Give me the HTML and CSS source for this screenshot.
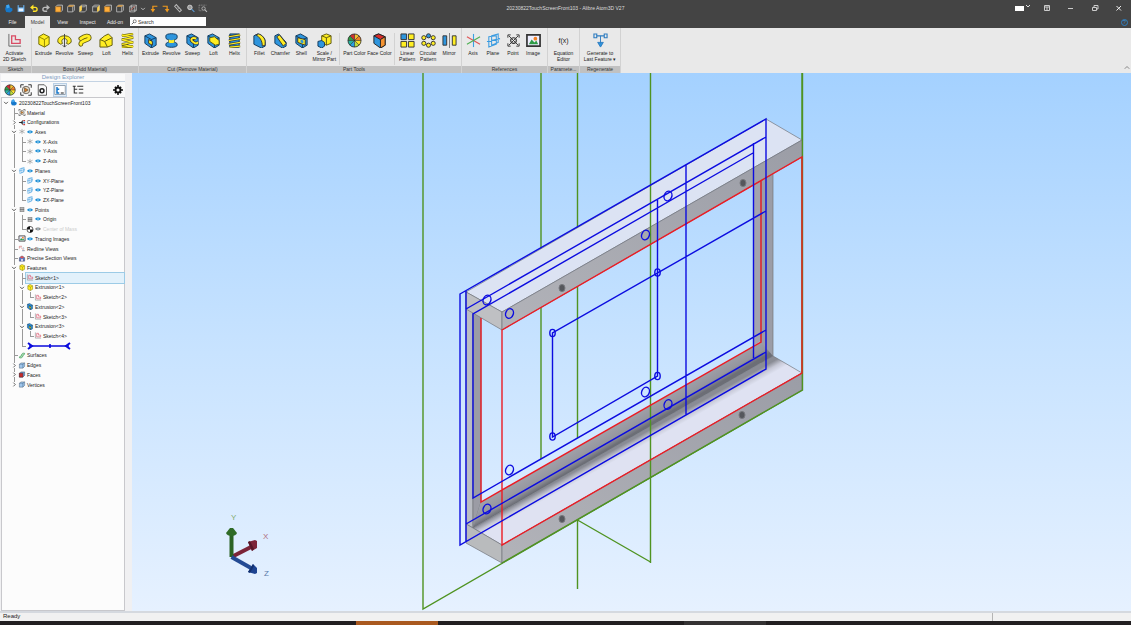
FILE: index.html
```html
<!DOCTYPE html>
<html lang="en">
<head>
<meta charset="utf-8">
<title>20230822TouchScreenFront103 - Alibre Atom3D V27</title>
<link rel="stylesheet" href="styles.css">
</head>
<body>
<svg class="defs" aria-hidden="true">
  <defs>
    <symbol id="logo" viewBox="0 0 16 16"><path d="M3 2l5-1 2 5 4 2v4l-4 3-7-1-2-5z" fill="#1677c9"/><path d="M3 2l5-1 1 5-5 2z" fill="#3fa5ee"/></symbol>
    <symbol id="save" viewBox="0 0 16 16"><path d="M2 2h12v12H2z" fill="#69b1ef"/><path d="M4 2h8v4H4z" fill="#444"/><path d="M4 8h8v5H4z" fill="#e8f3ff"/></symbol>
    <symbol id="undo" viewBox="0 0 16 16"><path d="M4 6h6a3 3 0 0 1 0 7H6" fill="none" stroke="#ffe227" stroke-width="2.5"/><path d="M7 1v10L1 6z" fill="#ffe227"/></symbol>
    <symbol id="redo" viewBox="0 0 16 16"><path d="M12 6H6a3 3 0 0 0 0 7h4" fill="none" stroke="#bbb" stroke-width="2.5"/><path d="M9 1v10l6-5z" fill="#bbb"/></symbol>
    <symbol id="vfront" viewBox="0 0 16 16"><path d="M2 5l3-3h9v9l-3 3" fill="none" stroke="#ccc" stroke-width="1.5"/><path d="M2 5h9v9H2z" fill="#ffae3b" stroke="#d98b22"/></symbol>
    <symbol id="vtop" viewBox="0 0 16 16"><path d="M2 5l3-3h9v9l-3 3H2zM11 5v9M11 5l3-3" fill="none" stroke="#bbb" stroke-width="1.5"/><path d="M2 5l3-3h9l-3 3z" fill="#e2a54b"/></symbol>
    <symbol id="vside" viewBox="0 0 16 16"><path d="M2 5l3-3h9v9l-3 3H2zM2 5h9l3-3" fill="none" stroke="#bbb" stroke-width="1.5"/><path d="M2 5l4-3v9l-4 3z" fill="#ffd34d"/></symbol>
    <symbol id="vright" viewBox="0 0 16 16"><path d="M2 5l3-3h9v9l-3 3H2zM2 5h9" fill="none" stroke="#bbb" stroke-width="1.5"/><path d="M10 6l4-4v9l-4 3z" fill="#ffd34d"/></symbol>
    <symbol id="viso" viewBox="0 0 16 16"><path d="M2 5l3-3h9v9l-3 3H2zM2 5h9v9M11 5l3-3M5 2v9h9M5 11l-3 3" fill="none" stroke="#ccc" stroke-width="1.2"/><path d="M4 11l7-7" stroke="#d06a5e" stroke-width="1.5"/></symbol>
    <symbol id="arrL" viewBox="0 0 16 16"><path d="M14 4H6v7" fill="none" stroke="#f09a1e" stroke-width="2.2"/><path d="M2 9h8l-4 6z" fill="#f09a1e"/></symbol>
    <symbol id="arrR" viewBox="0 0 16 16"><path d="M2 4h8v7" fill="none" stroke="#f09a1e" stroke-width="2.2"/><path d="M6 9h8l-4 6z" fill="#f09a1e"/></symbol>
    <symbol id="ruler" viewBox="0 0 16 16"><path d="M2 4l3-3 9 10-3 3z" fill="none" stroke="#bbb" stroke-width="1.8"/><path d="M6 6l2-1M8 9l2-2" stroke="#bbb"/></symbol>
    <symbol id="lens" viewBox="0 0 16 16"><circle cx="6" cy="6" r="4" fill="#999" stroke="#ddd" stroke-width="1.5"/><path d="M9 9l5 5" stroke="#5b9bd5" stroke-width="2"/></symbol>
    <symbol id="lensbox" viewBox="0 0 16 16"><path d="M1 2h13M1 2v10h6" fill="none" stroke="#999" stroke-width="1.3" stroke-dasharray="2 1"/><circle cx="9" cy="8" r="3" fill="none" stroke="#bbb" stroke-width="1.5"/><path d="M11 10l4 4" stroke="#bbb" stroke-width="1.8"/></symbol>
    <symbol id="chev" viewBox="0 0 8 8"><path d="M1 3l3 3 3-3" fill="none" stroke="currentColor" stroke-width="1.2"/></symbol>
    <symbol id="chevR" viewBox="0 0 8 8"><path d="M3 1l3 3-3 3" fill="none" stroke="currentColor" stroke-width="1.1"/></symbol>

    <symbol id="sketch" viewBox="0 0 16 16"><path d="M2 1v13h13" fill="none" stroke="#666"/><path d="M5 11V3h4v4h5v4z" fill="none" stroke="#d94c64" stroke-width="1.4"/></symbol>
    <symbol id="extrude" viewBox="0 0 16 16"><path d="M3 4l5-3 6 3v8l-5 3-6-3z" fill="#ffee22" stroke="#6c6600"/><path d="M3 4l6 3v8M9 7l5-3" fill="none" stroke="#8c8300"/></symbol>
    <symbol id="revolve" viewBox="0 0 16 16"><path d="M1 10C0 5 4 3 8 3s8 2 7 7l-3 2-2-1c2-3 0-5-2-5S4 8 6 11l-2 1z" fill="#ffee22" stroke="#5c5610"/><path d="M8 1v14M6 13l2 2 2-2" stroke="#444" fill="none"/></symbol>
    <symbol id="sweep" viewBox="0 0 16 16"><path d="M3 12C2 8 12 8 12 5S7 3 3 6" fill="none" stroke="#5c5610" stroke-width="5" stroke-linecap="round"/><path d="M3 12C2 8 12 8 12 5S7 3 3 6" fill="none" stroke="#ffee22" stroke-width="3.2" stroke-linecap="round"/></symbol>
    <symbol id="loft" viewBox="0 0 16 16"><path d="M1 7l5-4 4-2 4 4v8l-5 2H1z" fill="#ffee22" stroke="#5c5610"/><path d="M1 7l5 2 8-4M6 9l3 6" fill="none" stroke="#5c5610"/></symbol>
    <symbol id="helix" viewBox="0 0 16 16"><path d="M2 2l12 3L2 7l12 3-12 2 12 3M14 1L2 3M14 14L2 15" fill="none" stroke="#5c5610" stroke-width="2.6"/><path d="M2 2l12 3L2 7l12 3-12 2 12 3M14 1L2 3M14 14L2 15" fill="none" stroke="#ffee22" stroke-width="1.3"/></symbol>
    <symbol id="cutbox" viewBox="0 0 16 16"><path d="M2 3l5-2 7 4v8l-5 3-7-5z" fill="#2e95dd" stroke="#123a5c"/><path d="M2 3l7 4v9M9 7l5-2" fill="none" stroke="#123a5c"/></symbol>
    <symbol id="cextrude" viewBox="0 0 16 16"><use href="#cutbox"/><path d="M6 7l4 2v4l-4-2z" fill="#ffee22" stroke="#333"/></symbol>
    <symbol id="crevolve" viewBox="0 0 16 16"><path d="M2 3c0-3 12-3 12 0v2c0 2-3 2-3 2v3s3 0 3 2v1c0 3-12 3-12 0v-1c0-2 3-2 3-2V7S2 7 2 5z" fill="#2e95dd" stroke="#123a5c"/><path d="M5 7c2 1 4 1 6 0v3c-2 1-4 1-6 0z" fill="#ffee22"/></symbol>
    <symbol id="csweep" viewBox="0 0 16 16"><use href="#cutbox"/><path d="M12 6c-4-2-7 1-4 3s3 3 6 1" fill="none" stroke="#333" stroke-width="3.6"/><path d="M12 6c-4-2-7 1-4 3s3 3 6 1" fill="none" stroke="#ffee22" stroke-width="2"/></symbol>
    <symbol id="cloft" viewBox="0 0 16 16"><use href="#cutbox"/><path d="M4 5l5-1 5 4v4l-4 1-6-4z" fill="#ffee22" stroke="#5c5610"/></symbol>
    <symbol id="chelix" viewBox="0 0 16 16"><path d="M3 1h10v14H3z" fill="#2e95dd" stroke="#123a5c"/><path d="M2 4l12-2M2 8l12-2M2 12l12-2M3 15l11-1" stroke="#333" stroke-width="2.6"/><path d="M2 4l12-2M2 8l12-2M2 12l12-2M3 15l11-1" stroke="#ffee22" stroke-width="1.3"/></symbol>
    <symbol id="fillet" viewBox="0 0 16 16"><path d="M2 3l4-2c5 1 8 5 8 8v5l-4 2-8-4z" fill="#2e95dd" stroke="#123a5c"/><path d="M4 2l3-1c4 1 7 5 7 8v4l-3 1c0-6-3-10-7-12z" fill="#ffee22" stroke="#333"/></symbol>
    <symbol id="chamfer" viewBox="0 0 16 16"><path d="M2 3l4-2 8 9v4l-4 2-8-5z" fill="#2e95dd" stroke="#123a5c"/><path d="M4 4l3-2 7 9-3 3z" fill="#ffee22" stroke="#333"/></symbol>
    <symbol id="shell" viewBox="0 0 16 16"><use href="#cutbox"/><path d="M4 5l8 2v6l-8-3z" fill="#ffee22" stroke="#333"/><path d="M7 7l3 1v3L7 10z" fill="#2e95dd"/></symbol>
    <symbol id="scale" viewBox="0 0 16 16"><path d="M5 3l5-2 5 2v8l-5 2-5-3z" fill="#ffee22" stroke="#5c5610"/><path d="M10 5v8M5 3l5 2 5-2" fill="none" stroke="#5c5610"/><path d="M1 9l4-1 3 2v4l-3 2-4-2z" fill="#2e95dd" stroke="#123a5c"/></symbol>
    <symbol id="wheel" viewBox="0 0 16 16"><path d="M8 8V1a7 7 0 0 1 5 2z" fill="#f4c12e"/><path d="M8 8l5-5a7 7 0 0 1 2 5z" fill="#f08226"/><path d="M8 8h7a7 7 0 0 1-2 5z" fill="#ffe227"/><path d="M8 8l5 5a7 7 0 0 1-5 2z" fill="#b8dc3f"/><path d="M8 8v7a7 7 0 0 1-5-2z" fill="#2b9fe2"/><path d="M8 8l-5 5a7 7 0 0 1-2-5z" fill="#27b5a0"/><path d="M8 8H1a7 7 0 0 1 2-5z" fill="#2f9c47"/><path d="M8 8L3 3a7 7 0 0 1 5-2z" fill="#cf3030"/><path d="M8 1v14M1 8h14M3 3l10 10M13 3L3 13" stroke="#222" stroke-width=".6"/><circle cx="8" cy="8" r="7" fill="none" stroke="#222" stroke-width=".8"/></symbol>
    <symbol id="facecolor" viewBox="0 0 16 16"><path d="M2 3l5-2 7 3v9l-5 3-7-5z" fill="#2e95dd" stroke="#222"/><path d="M2 3l5-2 7 3-5 3z" fill="#d92d2d" stroke="#222"/><path d="M9 7l5-3v9l-5 3z" fill="#f59331" stroke="#222"/></symbol>
    <symbol id="linear" viewBox="0 0 16 16"><path d="M1 1h6v6H1z" fill="#2e95dd" stroke="#333"/><path d="M9 1h6v6H9zM1 9h6v6H1zM9 9h6v6H9z" fill="#ffee22" stroke="#333"/></symbol>
    <symbol id="circular" viewBox="0 0 16 16"><g fill="#ffee22" stroke="#333"><circle cx="13" cy="5" r="2.2"/><circle cx="13" cy="11" r="2.2"/><circle cx="8" cy="13" r="2.2"/><circle cx="3" cy="11" r="2.2"/><circle cx="3" cy="5" r="2.2"/><circle cx="8" cy="3" r="2.2" fill="#2e95dd"/></g></symbol>
    <symbol id="mirror" viewBox="0 0 16 16"><path d="M1 3h4v10H1z" fill="#2e95dd" stroke="#333"/><path d="M11 3h4v10h-4z" fill="#ffee22" stroke="#333"/><path d="M8 0v16" stroke="#777"/></symbol>
    <symbol id="axis" viewBox="0 0 16 16"><path d="M8 1v14" stroke="#3aa0e0" stroke-width="1.2"/><path d="M1 4l14 8" stroke="#e05555" stroke-width="1.2"/><path d="M1 12l14-8" stroke="#4caf50" stroke-width="1.2"/></symbol>
    <symbol id="plane" viewBox="0 0 16 16"><path d="M3 4l8-1v9l-8 3zM6 3l7-2v9l-7 3zM1 9l14-3" fill="none" stroke="#3a9be0" stroke-width="1.1"/></symbol>
    <symbol id="point" viewBox="0 0 16 16"><circle cx="8" cy="8" r="3" fill="none" stroke="#333" stroke-width="1.2"/><path d="M3 3l10 10M13 3L3 13M2 5V2h3M11 2h3v3M14 11v3h-3M5 14H2v-3" fill="none" stroke="#333"/></symbol>
    <symbol id="image" viewBox="0 0 16 16"><path d="M1 2h14v12H1z" fill="#eef" stroke="#333" stroke-width="1.8"/><path d="M3 12l3-5 3 3 2-2 2 4z" fill="#2f9c47"/><circle cx="10" cy="6" r="2" fill="#f08226"/></symbol>
    <symbol id="regen" viewBox="0 0 16 16"><path d="M1 1h3v4H1zM12 1h3v4h-3zM4 3h8" fill="none" stroke="#2e7cc0" stroke-width="1.2"/><path d="M8 3v8M5 10l3 5 3-5z" fill="#2e95dd" stroke="#2e7cc0"/></symbol>
    <symbol id="material" viewBox="0 0 16 16"><path d="M1 5V1h4M11 1h4v4M15 11v4h-4M5 15H1v-4" fill="none" stroke="#333" stroke-width="1.3"/><circle cx="8" cy="8" r="5" fill="#e8dcc6" stroke="#444"/><path d="M6 5l5 3-5 3z" fill="#d9791e" stroke="#444" stroke-width=".7"/></symbol>
    <symbol id="docgear" viewBox="0 0 16 16"><path d="M3 1h8l3 3v11H3z" fill="none" stroke="#333"/><circle cx="8" cy="9" r="2.6" fill="none" stroke="#222" stroke-width="2"/></symbol>
    <symbol id="explorer" viewBox="0 0 16 16"><path d="M1 2h14v12H1z" fill="#fff" stroke="#789"/><path d="M4 4v8h3M4 7h3" stroke="#1677c9" fill="none" stroke-width="2"/><path d="M9 12h4" stroke="#333" stroke-width="1.5"/></symbol>
    <symbol id="branch" viewBox="0 0 16 16"><path d="M1 3h4M3 3v9h4M3 7h4M7 3h8M9 7h6M9 12h6" fill="none" stroke="#333" stroke-width="1.4"/></symbol>
    <symbol id="gear" viewBox="0 0 16 16"><circle cx="8" cy="8" r="4" fill="none" stroke="#111" stroke-width="3"/><path d="M8 0v4M8 12v4M0 8h4M12 8h4M3 3l2 2M11 11l2 2M13 3l-2 2M5 11l-2 2" stroke="#111" stroke-width="2.5"/></symbol>
    <symbol id="config" viewBox="0 0 16 16"><path d="M1 8h8M9 3v10" stroke="#333" stroke-width="2"/><path d="M8 5v6L3 8z" fill="#222"/><path d="M11 2h4v3h-4zM11 11h4v3h-4z" fill="#c33"/><path d="M11 6h4v4h-4z" fill="#38c"/></symbol>
    <symbol id="taxis" viewBox="0 0 16 16"><path d="M8 2v12M2 5l12 6M2 11l12-6" stroke="#888" stroke-width="1.3"/></symbol>
    <symbol id="eye" viewBox="0 0 16 16"><path d="M0 8c4-5 12-5 16 0-4 5-12 5-16 0z" fill="currentColor"/><circle cx="8" cy="8" r="2" fill="#bde3fa"/></symbol>
    <symbol id="tpoint" viewBox="0 0 16 16"><path d="M4 3v10M12 3v10M8 3v10M3 4h10M3 12h10M3 8h10" stroke="#555" stroke-width="1.4"/></symbol>
    <symbol id="mass" viewBox="0 0 16 16"><circle cx="8" cy="8" r="7" fill="#fff" stroke="#111" stroke-width="1.5"/><path d="M8 8V1a7 7 0 0 0-7 7zM8 8v7a7 7 0 0 0 7-7z" fill="#111"/></symbol>
    <symbol id="redline" viewBox="0 0 16 16"><path d="M2 3h6M2 3v5M5 5l8 8" fill="none" stroke="#c66" stroke-width="1.4"/><path d="M8 13h6M10 6l3 2" stroke="#579" stroke-width="1.4"/></symbol>
    <symbol id="section" viewBox="0 0 16 16"><path d="M2 6l6-4 6 4v8H2z" fill="#5577c8" stroke="#334"/><path d="M3 5l5-3 5 3-5 3z" fill="#d55"/><path d="M6 9h4v5H6z" fill="#dde"/></symbol>
    <symbol id="surface" viewBox="0 0 16 16"><path d="M2 13c0-5 5-2 5-6s4-5 7-4c0 5-4 3-4 6s-4 6-8 4z" fill="#a9dfb5" stroke="#2f8f47" stroke-width="1.4"/></symbol>
    <symbol id="edgebox" viewBox="0 0 16 16"><path d="M2 5l4-3h8v8l-4 4H2z" fill="#9fc6ec" stroke="#456"/><path d="M2 5h8v9M10 5l4-3" fill="none" stroke="#357"/></symbol>
    <symbol id="facebox" viewBox="0 0 16 16"><path d="M2 5l4-3h8v8l-4 4H2z" fill="#6a9ad0" stroke="#345"/><path d="M2 5h8v9H2z" fill="#c62a2a" stroke="#522"/></symbol>
  </defs>
</svg>

<header class="titlebar">
  <div class="quick">
    <svg><use href="#logo"/></svg><svg><use href="#save"/></svg><svg><use href="#undo"/></svg><svg><use href="#redo"/></svg><svg><use href="#vfront"/></svg><svg><use href="#vtop"/></svg><svg><use href="#vside"/></svg><svg><use href="#vright"/></svg><svg><use href="#vfront"/></svg><svg><use href="#vtop"/></svg><svg><use href="#viso"/></svg><svg class="narrow"><use href="#chev"/></svg><svg><use href="#arrL"/></svg><svg><use href="#arrR"/></svg><svg><use href="#ruler"/></svg><svg><use href="#lens"/></svg><svg><use href="#lensbox"/></svg>
  </div>
  <h1 class="title">20230822TouchScreenFront103 - Alibre Atom3D V27</h1>
  <div class="controls">
    <button class="win" aria-label="Theme"><svg viewBox="0 0 16 8"><path d="M0 2h9v5H0z" fill="#fff"/><path d="M11 1l2 2 2-2" fill="none" stroke="#ddd"/></svg></button>
    <button class="win" aria-label="Ribbon options"><svg viewBox="0 0 16 8"><path d="M5.5 1.5h5v5h-5zM5.5 3h5M8 3v3" fill="none" stroke="#ccc"/></svg></button>
    <button class="win" aria-label="Minimize"><svg viewBox="0 0 16 8"><path d="M5 4.500h5" stroke="#ccc"/></svg></button>
    <button class="win" aria-label="Restore"><svg viewBox="0 0 16 8"><path d="M5.5 3.500h4v3h-4zM7 3V1.500h4V5H10" fill="none" stroke="#ccc"/></svg></button>
    <button class="win" aria-label="Close"><svg viewBox="0 0 16 8"><path d="M5.500 2l4.500 4.500M10 2L5.500 6.500" stroke="#eee"/></svg></button>
  </div>
</header>

<nav class="tabs">
  <button class="tab">File</button><button class="tab active">Model</button><button class="tab">View</button><button class="tab">Inspect</button><button class="tab wide">Add-on</button>
  <label class="search"><svg viewBox="0 0 8 8"><circle cx="5" cy="3" r="2" fill="none" stroke="#444" stroke-width=".8"/><path d="M4 4L1 7" stroke="#444"/></svg><input type="text" placeholder="Search" aria-label="Search"></label>
  <button class="help" aria-label="Help">?</button>
</nav>

<section class="ribbon">
  <div class="group sk"><div class="tools"><button class="tool w29"><svg><use href="#sketch"/></svg>Activate<br>2D Sketch</button></div><div class="caption">Sketch</div></div>
  <div class="group boss"><div class="tools">
    <button class="tool"><svg><use href="#extrude"/></svg>Extrude</button><button class="tool"><svg><use href="#revolve"/></svg>Revolve</button><button class="tool"><svg><use href="#sweep"/></svg>Sweep</button><button class="tool"><svg><use href="#loft"/></svg>Loft</button><button class="tool"><svg><use href="#helix"/></svg>Helix</button></div><div class="caption">Boss (Add Material)</div></div>
  <div class="group cut"><div class="tools">
    <button class="tool"><svg><use href="#cextrude"/></svg>Extrude</button><button class="tool"><svg><use href="#crevolve"/></svg>Revolve</button><button class="tool"><svg><use href="#csweep"/></svg>Sweep</button><button class="tool"><svg><use href="#cloft"/></svg>Loft</button><button class="tool"><svg><use href="#chelix"/></svg>Helix</button></div><div class="caption">Cut (Remove Material)</div></div>
  <div class="group part"><div class="tools">
    <div class="sub s93"><button class="tool"><svg><use href="#fillet"/></svg>Fillet</button><button class="tool"><svg><use href="#chamfer"/></svg>Chamfer</button><button class="tool"><svg><use href="#shell"/></svg>Shell</button><button class="tool w25"><svg><use href="#scale"/></svg>Scale /<br>Mirror Part</button></div>
    <div class="sub s56"><button class="tool w25"><svg><use href="#wheel"/></svg>Part Color</button><button class="tool w25"><svg><use href="#facecolor"/></svg>Face Color</button></div>
    <div class="sub s66"><button class="tool"><svg><use href="#linear"/></svg>Linear<br>Pattern</button><button class="tool"><svg><use href="#circular"/></svg>Circular<br>Pattern</button><button class="tool"><svg><use href="#mirror"/></svg>Mirror</button></div>
  </div><div class="caption">Part Tools</div></div>
  <div class="group refs"><div class="tools">
    <button class="tool w20"><svg><use href="#axis"/></svg>Axis</button><button class="tool w20"><svg><use href="#plane"/></svg>Plane</button><button class="tool w20"><svg><use href="#point"/></svg>Point</button><button class="tool w20"><svg><use href="#image"/></svg>Image</button></div><div class="caption">References</div></div>
  <div class="group param"><div class="tools"><button class="tool w29"><span class="fx">f(x)</span>Equation<br>Editor</button></div><div class="caption">Paramete...</div></div>
  <div class="group gen"><div class="tools"><button class="tool w38"><svg><use href="#regen"/></svg>Generate to<br>Last Feature ▾</button></div><div class="caption">Regenerate</div></div>
  <button class="collapse" aria-label="Collapse ribbon"><svg viewBox="0 0 8 8"><path d="M1 5l3-3 3 3" fill="none" stroke="#666"/></svg></button>
</section>

<main class="work">
  <aside class="explorer">
    <h2 class="heading">Design Explorer</h2>
    <div class="bar">
      <button class="ico" aria-label="Colors"><svg><use href="#wheel"/></svg></button><button class="ico" aria-label="Material"><svg><use href="#material"/></svg></button><button class="ico" aria-label="Properties"><svg><use href="#docgear"/></svg></button><button class="ico on" aria-label="Explorer"><svg><use href="#explorer"/></svg></button><button class="ico" aria-label="Hierarchy"><svg><use href="#branch"/></svg></button><button class="ico last" aria-label="Options"><svg><use href="#gear"/></svg></button>
    </div>
    <div class="tree">
      <div class="row"><i class="x"><svg><use href="#chev"/></svg></i><svg><use href="#logo"/></svg><span>20230822TouchScreenFront103</span></div>
      <div class="row"><i></i><i class="v t"></i><svg><use href="#material"/></svg><span>Material</span></div>
      <div class="row"><i></i><i class="v x"><svg><use href="#chevR"/></svg></i><svg><use href="#config"/></svg><span>Configurations</span></div>
      <div class="row"><i></i><i class="v x"><svg><use href="#chev"/></svg></i><svg><use href="#taxis"/></svg><svg class="eye"><use href="#eye"/></svg><span>Axes</span></div>
      <div class="row"><i></i><i class="v"></i><i class="v t"></i><svg><use href="#taxis"/></svg><svg class="eye"><use href="#eye"/></svg><span>X-Axis</span></div>
      <div class="row"><i></i><i class="v"></i><i class="v t"></i><svg><use href="#taxis"/></svg><svg class="eye"><use href="#eye"/></svg><span>Y-Axis</span></div>
      <div class="row"><i></i><i class="v"></i><i class="e t"></i><svg><use href="#taxis"/></svg><svg class="eye"><use href="#eye"/></svg><span>Z-Axis</span></div>
      <div class="row"><i></i><i class="v x"><svg><use href="#chev"/></svg></i><svg><use href="#plane"/></svg><svg class="eye"><use href="#eye"/></svg><span>Planes</span></div>
      <div class="row"><i></i><i class="v"></i><i class="v t"></i><svg><use href="#plane"/></svg><svg class="eye"><use href="#eye"/></svg><span>XY-Plane</span></div>
      <div class="row"><i></i><i class="v"></i><i class="v t"></i><svg><use href="#plane"/></svg><svg class="eye"><use href="#eye"/></svg><span>YZ-Plane</span></div>
      <div class="row"><i></i><i class="v"></i><i class="e t"></i><svg><use href="#plane"/></svg><svg class="eye"><use href="#eye"/></svg><span>ZX-Plane</span></div>
      <div class="row"><i></i><i class="v x"><svg><use href="#chev"/></svg></i><svg><use href="#tpoint"/></svg><svg class="eye"><use href="#eye"/></svg><span>Points</span></div>
      <div class="row"><i></i><i class="v"></i><i class="v t"></i><svg><use href="#tpoint"/></svg><svg class="eye"><use href="#eye"/></svg><span>Origin</span></div>
      <div class="row"><i></i><i class="v"></i><i class="e t"></i><svg><use href="#mass"/></svg><svg class="eye off"><use href="#eye"/></svg><span class="dim">Center of Mass</span></div>
      <div class="row"><i></i><i class="v t"></i><svg><use href="#image"/></svg><svg class="eye"><use href="#eye"/></svg><span>Tracing Images</span></div>
      <div class="row"><i></i><i class="v t"></i><svg><use href="#redline"/></svg><span>Redline Views</span></div>
      <div class="row"><i></i><i class="v t"></i><svg><use href="#section"/></svg><span>Precise Section Views</span></div>
      <div class="row"><i></i><i class="v x"><svg><use href="#chev"/></svg></i><svg><use href="#extrude"/></svg><span>Features</span></div>
      <div class="row"><i></i><i class="v"></i><i class="v t"></i><div class="picked"><svg><use href="#sketch"/></svg><span>Sketch&lt;1&gt;</span></div></div>
      <div class="row"><i></i><i class="v"></i><i class="v x"><svg><use href="#chev"/></svg></i><svg><use href="#extrude"/></svg><span>Extrusion&lt;1&gt;</span></div>
      <div class="row"><i></i><i class="v"></i><i class="v"></i><i class="e t"></i><svg><use href="#sketch"/></svg><span>Sketch&lt;2&gt;</span></div>
      <div class="row"><i></i><i class="v"></i><i class="v x"><svg><use href="#chev"/></svg></i><svg><use href="#cextrude"/></svg><span>Extrusion&lt;2&gt;</span></div>
      <div class="row"><i></i><i class="v"></i><i class="v"></i><i class="e t"></i><svg><use href="#sketch"/></svg><span>Sketch&lt;3&gt;</span></div>
      <div class="row"><i></i><i class="v"></i><i class="v x"><svg><use href="#chev"/></svg></i><svg><use href="#cextrude"/></svg><span>Extrusion&lt;3&gt;</span></div>
      <div class="row"><i></i><i class="v"></i><i class="v"></i><i class="e t"></i><svg><use href="#sketch"/></svg><span>Sketch&lt;4&gt;</span></div>
      <div class="row"><i></i><i class="v"></i><i class="e t"></i><svg class="dog" viewBox="0 0 46 8"><path d="M3 4h40M24 2v4" stroke="#0a0adc" stroke-width="1.6"/><path d="M2 1l4 3-4 3M44 1l-4 3 4 3" fill="none" stroke="#0a0adc" stroke-width="2"/></svg></div>
      <div class="row"><i></i><i class="v t"></i><svg><use href="#surface"/></svg><span>Surfaces</span></div>
      <div class="row"><i></i><i class="v x"><svg><use href="#chevR"/></svg></i><svg><use href="#edgebox"/></svg><span>Edges</span></div>
      <div class="row"><i></i><i class="v x"><svg><use href="#chevR"/></svg></i><svg><use href="#facebox"/></svg><span>Faces</span></div>
      <div class="row"><i></i><i class="e x"><svg><use href="#chevR"/></svg></i><svg><use href="#edgebox"/></svg><span>Vertices</span></div>
    </div>
  </aside>
  <div class="canvas">
    <svg class="scene" viewBox="132 73 999 538" preserveAspectRatio="xMidYMid meet" role="img" aria-label="Touch screen front frame">
      <defs>
        <linearGradient id="inner" gradientUnits="userSpaceOnUse" x1="463" y1="511" x2="473" y2="528"><stop offset="0" stop-color="#a3a4ac"/><stop offset=".7" stop-color="#94959e"/><stop offset="1" stop-color="#6c6e76"/></linearGradient>
        <linearGradient id="ledge" gradientUnits="userSpaceOnUse" x1="473" y1="528" x2="478" y2="537"><stop offset="0" stop-color="#8a8c95"/><stop offset=".5" stop-color="#c6c8d6"/><stop offset="1" stop-color="#dfe2f2"/></linearGradient>
        <linearGradient id="front" x1="0" y1="1" x2="1" y2="0"><stop offset="0" stop-color="#b2b3b9"/><stop offset="1" stop-color="#9b9da6"/></linearGradient>
      </defs>
      <g class="green"><path d="M423 73V609L802 390M802 73V390M541 73V459M577.5 73V438M577.5 520V589M577.5 520L650.5 562"/></g>
      <g stroke="#73757d" stroke-width=".7">
        <path d="M466 292H473V528L466 524Z" fill="#b9bcc3"/>
        <path d="M473 312H481V502L473 528Z" fill="#9b9ca5"/>
        <path d="M753 180H761V341L753 346Z" fill="#a2a4ae" stroke="none"/>
        <path d="M761 170H773V356L761 363Z" fill="#9b9da7"/>
        <path d="M481 502L761 342L773 356L473 528Z" fill="url(#inner)" stroke="none"/>
        <path d="M473 528L773 356L802 373L502 545Z" fill="url(#ledge)"/>
        <path d="M466 524L473 528L502 545V563L466 543Z" fill="#b9bbbd"/>
        <path d="M502 545L802 373V390L502 563Z" fill="url(#front)"/>
        <path d="M466 292L766 119L802 140L502 312Z" fill="#dce3f3"/>
        <path d="M466 292L502 312V330L466 309Z" fill="#bfc0c3"/>
        <path d="M502 312L802 140V157L502 330Z" fill="url(#front)"/>
      </g>
      <g fill="#55575c" stroke="#77797e"><ellipse cx="562" cy="288" rx="3" ry="3.6"/><ellipse cx="743" cy="183" rx="3" ry="3.6"/><ellipse cx="742" cy="415" rx="3" ry="3.6"/><ellipse cx="562" cy="519" rx="3" ry="3.6"/></g>
      <g class="green"><path d="M650.5 73V563M802.5 73V390L502 563"/></g>
      <g class="red"><path d="M502 330L802 157V373L502 545ZM481 318V502L761 342V181"/></g>
      <g class="blue">
        <path d="M460 294L766 119V369L460 545ZM466 291V542M466 309L766 137M753 153L473 314V498L766 330M466 524L766 352M753.5 143V358M686 165V415M657.5 200V376L552.5 437V333L766 211"/>
        <ellipse cx="487" cy="300" rx="3.8" ry="5" transform="rotate(20 487 300)"/><ellipse cx="509.5" cy="313.5" rx="3.8" ry="5" transform="rotate(20 509.5 313.5)"/><ellipse cx="668" cy="196" rx="3.8" ry="5" transform="rotate(20 668 196)"/><ellipse cx="645.5" cy="235" rx="3.8" ry="5" transform="rotate(20 645.5 235)"/><ellipse cx="645.5" cy="392" rx="3.8" ry="5" transform="rotate(20 645.5 392)"/><ellipse cx="668" cy="404.5" rx="3.8" ry="5" transform="rotate(20 668 404.5)"/><ellipse cx="509.5" cy="470" rx="3.8" ry="5" transform="rotate(20 509.5 470)"/><ellipse cx="487" cy="509" rx="3.8" ry="5" transform="rotate(20 487 509)"/>
        <ellipse cx="552.5" cy="333" rx="2.7" ry="3.6"/><ellipse cx="552.5" cy="436.5" rx="2.7" ry="3.6"/><ellipse cx="657.5" cy="272.5" rx="2.7" ry="3.6"/><ellipse cx="657.5" cy="376" rx="2.7" ry="3.6"/>
      </g>
      <g class="triad">
        <path class="rod" d="M231.5 557L251 547" stroke="#7c2438"/><path d="M248 542l7-2 2 1v7l-5 3z" fill="#7c2438"/><path d="M248 542l2-1 4 8-2 2z" fill="#561626"/>
        <path class="rod" d="M231.5 557V534" stroke="#2b6324"/><path d="M226 533l4-5h3l4 5c-1 4-10 4-11 0z" fill="#2f6b27"/>
        <path class="rod" d="M231.5 557L251 568" stroke="#234a94"/><path d="M253 564l4 4v5l-2 1-7-2z" fill="#1d4391"/><path d="M253 564l1 2-4 7-2-1z" fill="#12306f"/>
        <text x="231" y="520" fill="#83ab6e">Y</text><text x="263" y="539" fill="#b06d80">X</text><text x="264" y="576" fill="#5a7ba8">Z</text>
      </g>
    </svg>
  </div>
</main>

<footer class="status"><span class="ready">Ready</span><span class="cell"></span></footer>
<div class="taskbar"><span class="lead"></span><span class="hot"></span><span class="mid"></span><span class="warm"></span></div>
</body>
</html>
```
FILE: styles.css
```css
* { box-sizing: border-box; }
html, body { height: 100%; }
body {
  margin: 0;
  display: flex;
  flex-direction: column;
  overflow: hidden;
  background: #f0f0f0;
  color: #222;
  font: 5px/6px "Liberation Sans", Arial, sans-serif;
}
button { margin: 0; padding: 0; border: 0; background: none; color: inherit; font: inherit; }
svg { display: block; flex: none; }
.defs { position: absolute; width: 0; height: 0; }

.titlebar {
  flex: none;
  display: grid;
  grid-template-columns: 1fr auto 1fr;
  align-items: center;
  height: 16px;
  background: #444;
  color: #ddd;
}
.quick { display: flex; justify-content: space-between; align-items: center; width: 206px; margin-left: 3px; }
.quick svg { width: 12px; height: 9px; }
.quick .narrow { width: 8px; height: 5px; color: #ddd; }
.title { margin: 0; font-size: 5px; font-weight: 400; }
.controls { display: flex; justify-content: flex-end; }
.win { width: 24px; height: 16px; display: flex; align-items: center; justify-content: center; }
.win svg { width: 16px; height: 8px; }

.tabs { flex: none; display: flex; align-items: stretch; height: 12px; background: #444; color: #eee; }
.tab { width: 25px; text-align: center; }
.tab.active { background: #e9e9e9; color: #333; }
.tab.wide { width: 30px; }
.search { display: flex; align-items: center; gap: 1px; width: 76px; height: 9px; margin: 1px 0 0; padding-left: 1px; background: #fff; }
.search svg { width: 6px; height: 6px; }
.search input { flex: 1; min-width: 0; padding: 0; border: 0; outline: 0; background: none; font: inherit; }
.search input::placeholder { color: #333; opacity: 1; }
.help { width: 7px; height: 7px; margin: 3px 3px 0 auto; border: 1px solid #2d7fc1; border-radius: 50%; color: #3b97dd; line-height: 5px; }

.ribbon { flex: none; display: flex; height: 45px; background: #e9e9e9; }
.group { display: flex; flex-direction: column; justify-content: space-between; border-right: 1px solid #d2d2d2; }
.tools { display: flex; padding-top: 5px; height: 38px; }
.caption { height: 7px; background: #c1c1c1; color: #333; text-align: center; line-height: 7px; }
.tool { width: 21px; display: flex; flex-direction: column; align-items: center; justify-content: flex-start; text-align: center; white-space: nowrap; line-height: 6px; }
.tool svg { width: 15px; height: 15px; margin-bottom: 2px; }
.fx { height: 17px; font-size: 7px; line-height: 15px; }
.w20 { width: 20px; }
.w25 { width: 25px; }
.w29 { width: 29px; }
.w38 { width: 38px; }
.sk { width: 32px; }
.boss { width: 107px; }
.cut { width: 108px; }
.boss .tools, .cut .tools, .refs .tools { padding-left: 1px; }
.part { width: 215px; }
.refs { width: 86px; }
.param { width: 32px; }
.gen { width: 41px; }
.param .tools, .gen .tools { justify-content: center; }
.sub { display: flex; justify-content: center; height: 32px; border-right: 1px solid #d2d2d2; }
.sub:last-child { border: 0; }
.s93 { width: 93px; }
.s56 { width: 56px; }
.s66 { width: 66px; }
.collapse { margin: auto 1px 2px auto; }
.collapse svg { width: 6px; height: 6px; }

.work { flex: 1; min-height: 0; display: flex; }
.explorer { flex: none; display: flex; flex-direction: column; width: 132px; padding: 1px 7px 0 1px; background: #f0f0f2; }
.heading { margin: 0; height: 8px; border-bottom: 1px solid #c4d3e3; background: #fafafa; color: #7d9cc2; font-size: 6px; font-weight: 400; line-height: 7px; text-align: center; }
.bar { display: flex; align-items: center; gap: 4px; height: 15px; padding-left: 3px; background: #fafafa; }
.ico { width: 12px; height: 12px; }
.ico svg { width: 12px; height: 12px; }
.ico.on { margin: 0 2px; background: #e3eef8; outline: 1px solid #b9cfe4; }
.ico.last { margin-left: auto; padding: 1px; margin-right: 1px; }
.ico.last svg { width: 10px; height: 10px; }
.tree { flex: 1; min-height: 0; display: grid; grid-template-rows: repeat(30, minmax(0, 292fr)) minmax(0, 6630fr); border: 1px solid #c8c8cc; background: #fcfcfc; }
.row { display: flex; align-items: center; min-width: 0; white-space: nowrap; }
.row svg { width: 8px; height: 7px; }
.row span { padding-left: 1px; }
.row i { position: relative; flex: none; width: 8px; align-self: stretch; display: flex; align-items: center; }
.row i::before { content: ""; position: absolute; left: 4px; top: 0; bottom: 0; }
.row i.v::before { border-left: 1px solid #999; }
.row i.e::before { border-left: 1px solid #999; bottom: 50%; }
.row i.t::after { content: ""; position: absolute; left: 4px; right: 0; top: 50%; border-top: 1px solid #999; }
.row i.x svg { position: relative; height: 5px; background: #fcfcfc; }
.row .eye { height: 6px; color: #1e8fd5; }
.row .eye.off { color: #888; }
.row .dog { width: 46px; height: 8px; }
.dim { color: #ccc; }
.picked { flex: 1; align-self: stretch; display: flex; align-items: center; background: #e2f1fb; outline: 1px solid #9ccbe6; }

.canvas { flex: 1; min-width: 0; display: flex; background: linear-gradient(#a4d1ff, #c8e3ff 52%, #e6f1ff); }
.scene { width: 100%; height: 100%; }
.green, .red, .blue { fill: none; stroke-width: 1.4; }
.green { stroke: #4f9321; }
.red { stroke: #ec1c24; }
.blue { stroke: #0c0ce0; }
.triad { font-size: 8px; }
.rod { stroke-width: 4; }

.status { flex: none; display: flex; height: 10px; border-top: 2px solid #d5d9df; background: #f1f1f1; font-size: 6px; line-height: 7px; }
.ready { flex: 1; padding-left: 3px; }
.cell { width: 139px; border-left: 1px solid #b5b5b5; }
.taskbar { flex: none; display: flex; height: 4px; background: #221f21; }
.lead { width: 356px; }
.hot { width: 82px; background: #a9591f; }
.mid { width: 246px; }
.warm { width: 82px; background: #343233; }
```
